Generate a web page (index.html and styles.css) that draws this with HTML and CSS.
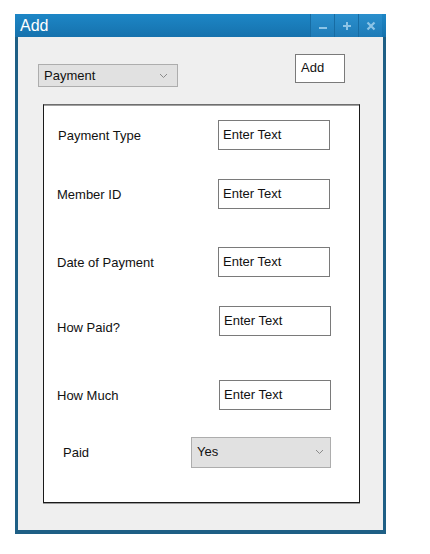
FILE: index.html
```html
<!DOCTYPE html>
<html>
<head>
<meta charset="utf-8">
<link rel="stylesheet" href="styles.css">
</head>
<body>
<div class="window">
  <div class="titlebar">
    <span class="title">Add</span>
    <div class="controls">
      <div class="ctl"><svg width="10" height="10" viewBox="0 0 10 10"><rect x="1" y="6" width="8" height="2" fill="#8cc4e6"/></svg></div>
      <div class="ctl"><svg width="10" height="10" viewBox="0 0 10 10"><path d="M4 1h2v3h3v2H6v3H4V6H1V4h3z" fill="#8cc4e6"/></svg></div>
      <div class="ctl"><svg width="10" height="10" viewBox="0 0 10 10"><path d="M1.5 1.5L8.5 8.5M8.5 1.5L1.5 8.5" stroke="#8cc4e6" stroke-width="2.2"/></svg></div>
    </div>
  </div>
  <div class="client">
    <div class="toprow">
      <div class="select select-top"><span>Payment</span><svg class="chev" width="9" height="6" viewBox="0 0 9 6"><path d="M1 1l3.5 3.5L8 1" fill="none" stroke="#8a8a8a" stroke-width="1"/></svg></div>
      <div class="addbtn">Add</div>
    </div>
    <div class="panel">
      <div class="row r1"><span class="label">Payment Type</span><div class="field">Enter Text</div></div>
      <div class="row r2"><span class="label">Member ID</span><div class="field">Enter Text</div></div>
      <div class="row r3"><span class="label">Date of Payment</span><div class="field">Enter Text</div></div>
      <div class="row r4"><span class="label">How Paid?</span><div class="field">Enter Text</div></div>
      <div class="row r5"><span class="label">How Much</span><div class="field">Enter Text</div></div>
      <div class="row r6"><span class="label">Paid</span><div class="select select-paid"><span>Yes</span><svg class="chev" width="9" height="6" viewBox="0 0 9 6"><path d="M1 1l3.5 3.5L8 1" fill="none" stroke="#8a8a8a" stroke-width="1"/></svg></div></div>
    </div>
  </div>
</div>
</body>
</html>
```
FILE: styles.css
```css
* { box-sizing: border-box; }
html, body { margin: 0; padding: 0; background: #ffffff; }
body {
  font-family: "Liberation Sans", Arial, sans-serif;
  font-size: 13px;
  color: #111;
  padding: 14px 0 0 15px;
}
.window {
  width: 371px;
  height: 520px;
  background: #1e5f85;
  padding: 0 3px 4px 3px;
  display: flex;
  flex-direction: column;
}
.titlebar {
  height: 23px;
  margin: 0 -3px;
  padding-left: 5px;
  background: linear-gradient(#1d86c6, #1672ad);
  display: flex;
  align-items: center;
  justify-content: space-between;
}
.title {
  color: #ffffff;
  font-size: 16px;
  line-height: 23px;
}
.controls {
  display: flex;
  height: 100%;
  margin-right: 4px;
}
.ctl {
  width: 24px;
  height: 100%;
  display: flex;
  align-items: center;
  justify-content: center;
  background: linear-gradient(#2a8fcd, #1e7bb7);
  border-left: 1px solid #176ca3;
}
.client {
  flex: 1;
  background: #efefef;
  padding: 17px 38px 27px 25px;
  display: flex;
  flex-direction: column;
}
.toprow {
  display: flex;
  justify-content: space-between;
  align-items: flex-start;
  margin-left: -5px;
  height: 50px;
}
.select {
  display: flex;
  align-items: center;
  justify-content: space-between;
  background: #e1e1e1;
  border: 1px solid #adadad;
  padding: 0 9px 0 5px;
}
.select-top {
  width: 140px;
  height: 23px;
  margin-top: 10px;
}
.addbtn {
  width: 50px;
  height: 29px;
  background: #ffffff;
  border: 1px solid #7a7a7a;
  padding: 5px 0 0 5px;
  line-height: 15px;
}
.panel {
  flex: 1;
  width: 317px;
  background: #ffffff;
  border: 1px solid #1a1a1a;
  border-top-color: #6e6e6e;
  box-shadow: 0 1px 0 #9a9a9a, inset 0 1px 0 #a0a0a0;
  display: flex;
  flex-direction: column;
}
.row {
  display: flex;
  align-items: center;
  height: 30px;
  padding-left: 13px;
}
.label {
  width: 161px;
}
.field {
  width: 112px;
  height: 30px;
  border: 1px solid #7a7a7a;
  padding: 0 0 2px 4px;
  display: flex;
  align-items: center;
  background: #fff;
}
.r1 { margin-top: 15px; padding-left: 14px; }
.r1 .label { width: 160px; }
.r2 { margin-top: 29px; }
.r3 { margin-top: 38px; }
.r4 { margin-top: 29px; }
.r4 .label { margin-top: 13px; width: 162px; }
.r5 { margin-top: 44px; }
.r5 .label { width: 162px; }
.r6 { margin-top: 27px; height: 31px; padding-left: 19px; }
.r6 .label { width: 128px; }
.select-paid {
  width: 140px;
  height: 31px;
  padding: 0 6px 2px 5px;
}
.chev { display: block; }
```
